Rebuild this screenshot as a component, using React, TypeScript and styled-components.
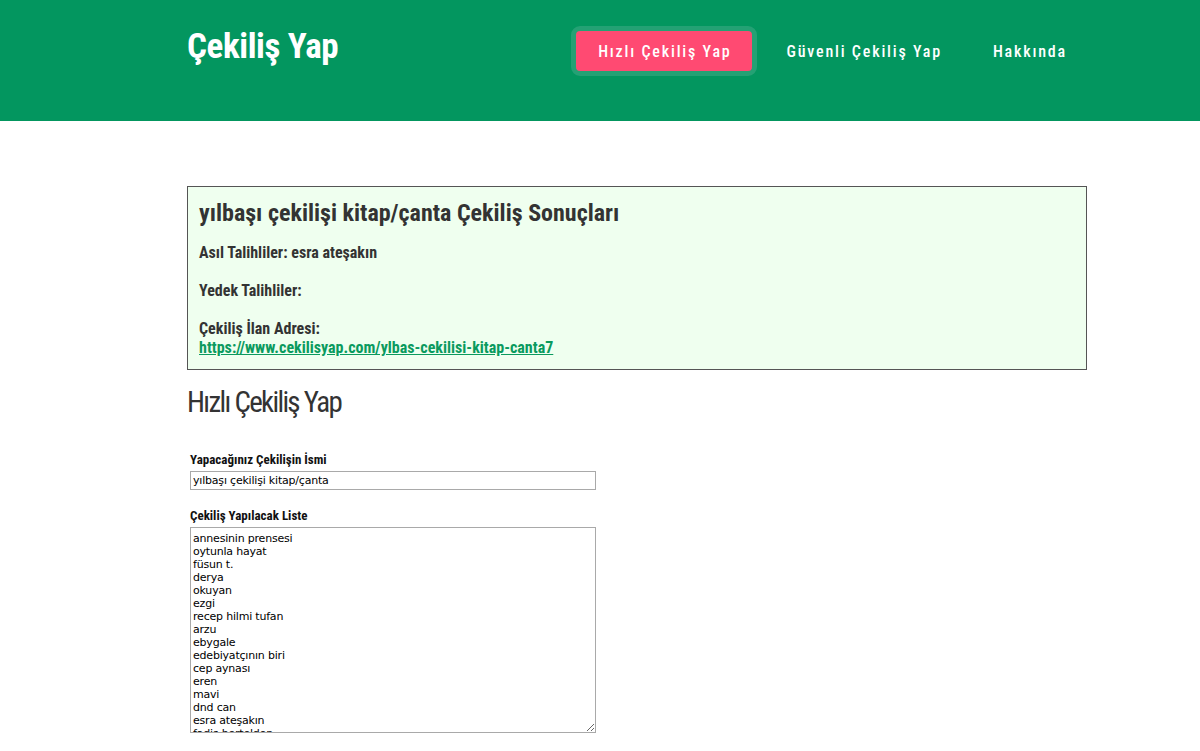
import React from "react";
import styled, { createGlobalStyle } from "styled-components";

const Global = createGlobalStyle`
  html, body { margin: 0; padding: 0; background: #fff; }
  body { font-family: Roboto, "Noto Sans", sans-serif; color: #333; }
  * { box-sizing: border-box; }
`;

const Header = styled.header`
  background: #03965f;
  height: 121px;
`;

const HeaderInner = styled.div`
  width: 900px;
  margin-left: 187px;
  display: flex;
  align-items: flex-start;
  justify-content: space-between;
  padding-top: 26px;
`;

const Logo = styled.a`
  font-family: Roboto, sans-serif;
  font-stretch: condensed;
  font-weight: 700;
  font-size: 35px;
  color: #fff;
  text-decoration: none;
  line-height: 42px;
  letter-spacing: -0.4px;
`;

const Nav = styled.nav`
  display: flex;
  align-items: center;
  margin-right: 20px;
`;

const NavItem = styled.a<{ $active?: boolean }>`
  display: flex;
  align-items: center;
  height: 50px;
  font-family: Roboto, sans-serif;
  font-stretch: condensed;
  font-weight: 500;
  font-size: 16px;
  letter-spacing: 1.8px;
  color: #fff;
  text-decoration: none;
  ${(p) =>
    p.$active
      ? `background: #ff4a72; border: 5px solid #24a174; border-radius: 9px; padding: 0 20px 0 22px; margin-right: 30px;`
      : `margin-right: 51px;`}
  &:last-child { margin-right: 0; }
`;

const Main = styled.main`
  width: 900px;
  margin: 65px 0 0 187px;
`;

const Result = styled.section`
  background: #efffef;
  border: 1px solid #555;
  padding: 12px 11px 12px;
`;

const ResultTitle = styled.h2`
  margin: 0 0 16px;
  font-family: Roboto, sans-serif;
  font-stretch: condensed;
  font-weight: 700;
  font-size: 24px;
  line-height: 28px;
  color: #333;
`;

const ResultLine = styled.p`
  margin: 0 0 19px;
  font-family: Roboto, sans-serif;
  font-stretch: condensed;
  font-weight: 700;
  font-size: 16px;
  line-height: 19px;
  color: #333;
  &:last-child { margin-bottom: 0; }
`;

const ResultLink = styled.a`
  color: #0a9a5e;
  text-decoration: underline;
`;

const PageTitle = styled.h1`
  margin: 13px 0 31px;
  font-family: "Roboto Condensed", Roboto, sans-serif;
  font-stretch: condensed;
  font-weight: 400;
  font-size: 29px;
  line-height: 38px;
  letter-spacing: -1.7px;
  color: #333;
`;

const Form = styled.form`
  display: flex;
  flex-direction: column;
  padding-left: 3px;
`;

const Label = styled.label`
  display: block;
  font-family: Roboto, sans-serif;
  font-stretch: condensed;
  font-weight: 700;
  font-size: 13px;
  line-height: 16px;
  color: #111;
  margin-bottom: 3px;
`;

const Field = styled.div`
  margin-bottom: 18px;
`;

const TextInput = styled.input`
  display: block;
  width: 406px;
  height: 19px;
  border: 1px solid #a9a9a9;
  padding: 0 2px;
  font-family: "DejaVu Sans", Verdana, sans-serif;
  font-size: 11px;
  letter-spacing: -0.2px;
  color: #000;
  outline: none;
`;

const TextArea = styled.textarea`
  display: block;
  width: 406px;
  height: 206px;
  border: 1px solid #a9a9a9;
  padding: 4px 2px 2px;
  font-family: "DejaVu Sans", Verdana, sans-serif;
  font-size: 11px;
  line-height: 13px;
  letter-spacing: -0.2px;
  color: #000;
  resize: both;
  outline: none;
`;

const names = [
  "annesinin prensesi",
  "oytunla hayat",
  "füsun t.",
  "derya",
  "okuyan",
  "ezgi",
  "recep hilmi tufan",
  "arzu",
  "ebygale",
  "edebiyatçının biri",
  "cep aynası",
  "eren",
  "mavi",
  "dnd can",
  "esra ateşakın",
  "fadiş hortelden",
  "kitapkurdu",
];

export default function App() {
  return (
    <>
      <Global />
      <Header>
        <HeaderInner>
          <Logo href="#">Çekiliş Yap</Logo>
          <Nav>
            <NavItem href="#" $active>Hızlı Çekiliş Yap</NavItem>
            <NavItem href="#">Güvenli Çekiliş Yap</NavItem>
            <NavItem href="#">Hakkında</NavItem>
          </Nav>
        </HeaderInner>
      </Header>
      <Main>
        <Result>
          <ResultTitle>yılbaşı çekilişi kitap/çanta Çekiliş Sonuçları</ResultTitle>
          <ResultLine>Asıl Talihliler: esra ateşakın</ResultLine>
          <ResultLine>Yedek Talihliler:</ResultLine>
          <ResultLine>
            Çekiliş İlan Adresi:
            <br />
            <ResultLink href="#">https://www.cekilisyap.com/ylbas-cekilisi-kitap-canta7</ResultLink>
          </ResultLine>
        </Result>
        <PageTitle>Hızlı Çekiliş Yap</PageTitle>
        <Form>
          <Field>
            <Label>Yapacağınız Çekilişin İsmi</Label>
            <TextInput defaultValue="yılbaşı çekilişi kitap/çanta" />
          </Field>
          <Field>
            <Label>Çekiliş Yapılacak Liste</Label>
            <TextArea defaultValue={names.join("\n")} />
          </Field>
        </Form>
      </Main>
    </>
  );
}
